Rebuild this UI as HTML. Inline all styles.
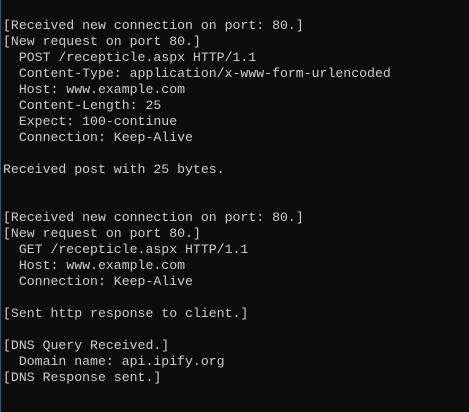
<!DOCTYPE html>
<html><head><meta charset="utf-8"><style>
html,body{margin:0;padding:0;background:#0c0c0c;width:469px;height:412px;overflow:hidden}
.b{position:absolute;left:0;top:0;width:1px;height:412px;background:#1d5a8a}
pre{margin:0;position:absolute;left:3px;top:18px;font-family:"Liberation Mono",monospace;font-size:13.2px;line-height:16px;color:#cccccc}
</style></head><body><div class="b"></div><pre>[Received new connection on port: 80.]
[New request on port 80.]
  POST /recepticle.aspx HTTP/1.1
  Content-Type: application/x-www-form-urlencoded
  Host: www.example.com
  Content-Length: 25
  Expect: 100-continue
  Connection: Keep-Alive

Received post with 25 bytes.


[Received new connection on port: 80.]
[New request on port 80.]
  GET /recepticle.aspx HTTP/1.1
  Host: www.example.com
  Connection: Keep-Alive

[Sent http response to client.]

[DNS Query Received.]
  Domain name: api.ipify.org
[DNS Response sent.]</pre></body></html>
